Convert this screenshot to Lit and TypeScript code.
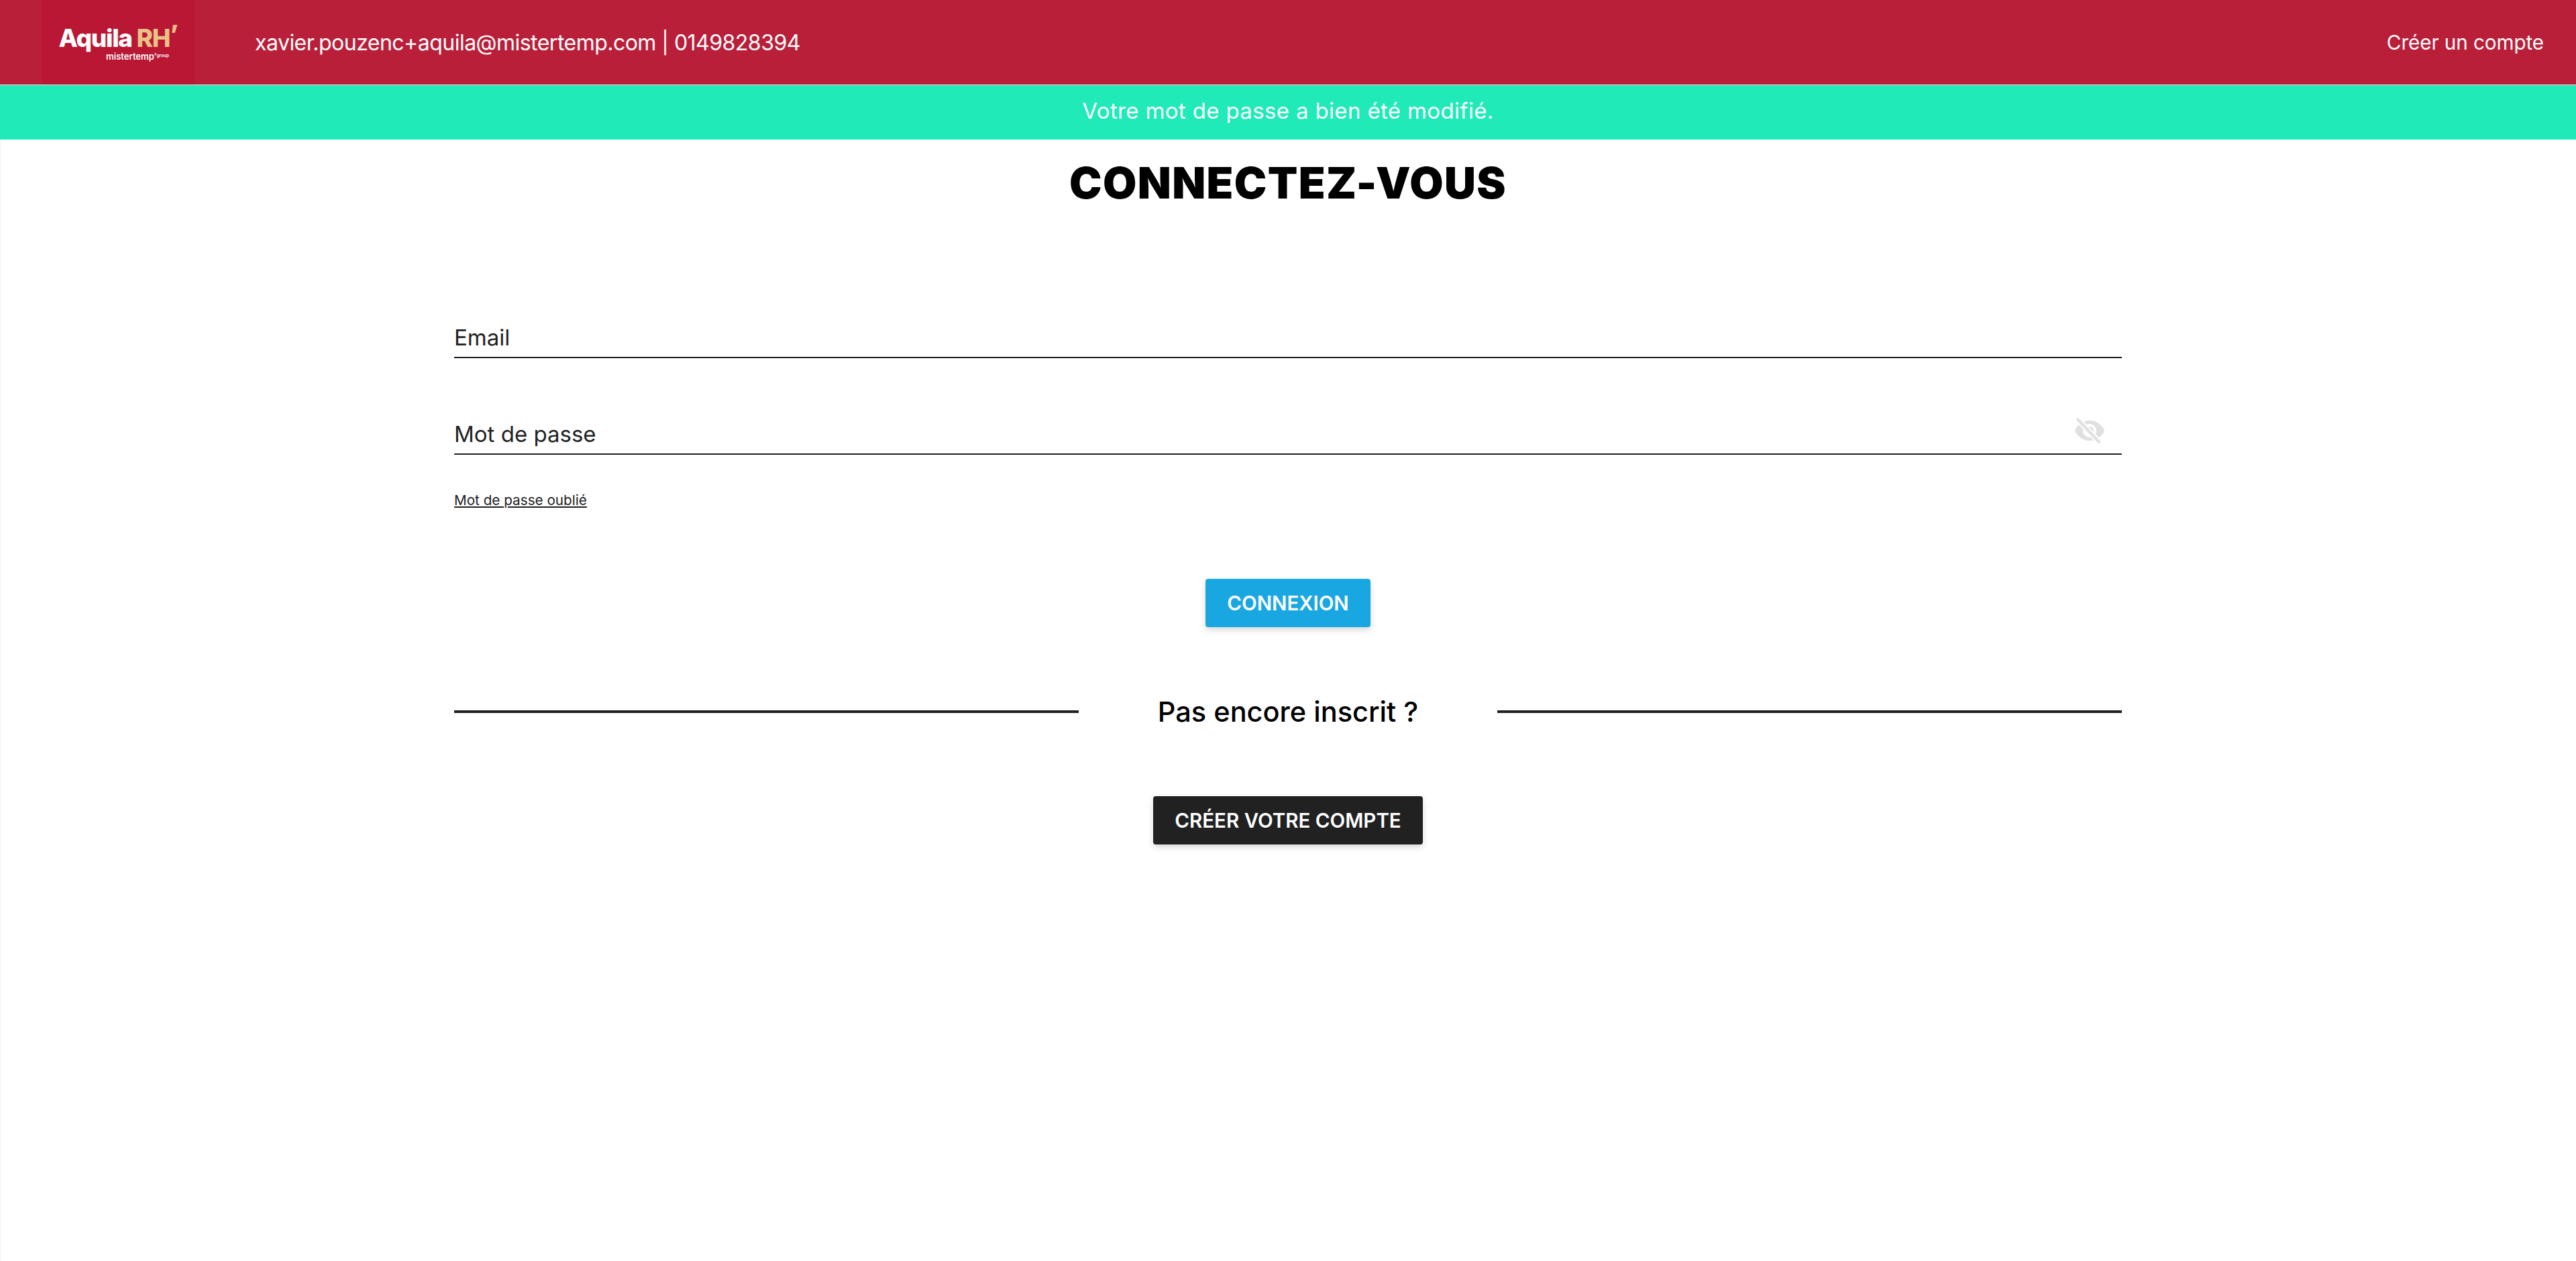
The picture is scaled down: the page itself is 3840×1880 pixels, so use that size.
import { LitElement, html, css } from "lit";
import { customElement } from "lit/decorators.js";

@customElement("app-root")
export class AppRoot extends LitElement {
  static styles = css`
    :host { display: block; min-height: 1880px; background: #fff; font-family: "Inter", "Noto Sans", sans-serif; color: #212121; }
    * { box-sizing: border-box; }
    .top { height: 127px; background: #ba1f3a; border-bottom: 1px solid #f3d5da; display: flex; align-items: center; padding: 0 48px 0 62px; color: #fff; }
    .logo { width: 228px; height: 126px; background: #b91733; flex: none; display: flex; flex-direction: column; align-items: center; padding-top: 41px; }
    .logo-main { font-size: 37px; line-height: 30px; height: 30px; font-weight: 800; letter-spacing: -1.3px; white-space: nowrap; }
    .logo-main span { color: #e8c187; }
    .logo-main em { font-style: normal; color: #e8c187; font-size: 38px; position: relative; top: -5px; }
    .logo-sub { font-size: 13px; line-height: 12px; height: 12px; margin-top: 6px; font-weight: 600; letter-spacing: 0; margin-left: 58px; white-space: nowrap; }
    .logo-sub small { font-size: 6.500px; letter-spacing: 0; vertical-align: 4px; }
    .user { margin-left: 90px; font-size: 32px; letter-spacing: -0.52px; white-space: nowrap; }
    .spacer { flex: 1; }
    .signup { font-size: 29.700px; letter-spacing: -0.1px; white-space: nowrap; }
    .notice { height: 81px; background: #1feab8; color: #fff; display: flex; align-items: center; justify-content: center; font-size: 33px; letter-spacing: 0.35px; padding-bottom: 6px; }
    .page { box-shadow: inset 1px 0 0 #f2f2f2; min-height: 1672px; padding-top: 20px; }
    h1 { margin: 0; height: 90px; line-height: 90px; text-align: center; color: #000; font-size: 65px; font-weight: 900; letter-spacing: 1.4px; }
    .form { width: 2486px; margin: 0 auto; }
    .field { height: 72px; border-bottom: 2px solid #212121; display: flex; align-items: flex-end; justify-content: space-between; font-size: 33px; line-height: 58px; }
    .field.email { margin-top: 144px; }
    .field.pass { margin-top: 72px; }
    .eye { width: 48px; height: 48px; margin-right: 24px; margin-bottom: 10px; display: block; fill: #e0e0e0; }
    .forgot { display: block; margin-top: 54px; font-size: 20.700px; line-height: 28px; color: #212121; text-decoration: underline; }
    .actions { display: flex; justify-content: center; }
    .btn { height: 72px; border-radius: 4px; color: #fff; font-size: 29.500px; font-weight: 600; display: flex; align-items: center; justify-content: center; box-shadow: 0 4px 10px rgba(0,0,0,0.16); white-space: nowrap; }
    .blue { width: 246px; background: #19a7e2; margin-top: 103px; }
    .dark { width: 402px; background: #212121; margin-top: 88px; }
    .divider { display: flex; align-items: center; margin-top: 88px; height: 76px; }
    .divider i { flex: 1; height: 4px; background: #212121; }
    .divider b { width: 624px; text-align: center; font-size: 41.500px; font-weight: 500; color: #000; }
  `;
  render() {
    return html`
      <header class="top">
        <div class="logo">
          <div class="logo-main">Aquila <span>RH</span><em>’</em></div>
          <div class="logo-sub">mistertemp’<small>group</small></div>
        </div>
        <div class="user">xavier.pouzenc+aquila@mistertemp.com | 0149828394</div>
        <div class="spacer"></div>
        <div class="signup">Créer un compte</div>
      </header>
      <div class="notice">Votre mot de passe a bien été modifié.</div>
      <main class="page">
        <h1>CONNECTEZ-VOUS</h1>
        <div class="form">
          <div class="field email"><span>Email</span></div>
          <div class="field pass"><span>Mot de passe</span>
            <svg class="eye" viewBox="0 0 24 24"><path d="M12 4.500C7 4.500 2.700 7.600 1 12c1.700 4.400 6 7.500 11 7.500s9.300-3.100 11-7.500c-1.700-4.400-6-7.500-11-7.500zM12 17a5 5 0 1 1 0-10 5 5 0 0 1 0 10zm0-8a3 3 0 1 0 0 6 3 3 0 0 0 0-6z"/><path d="M2.500 3 19.500 21" stroke="#fff" stroke-width="4.200" fill="none"/><path d="M2.500 3 19.500 21" stroke="#e0e0e0" stroke-width="2.200" fill="none"/></svg>
          </div>
          <a class="forgot">Mot de passe oublié</a>
          <div class="actions"><div class="btn blue">CONNEXION</div></div>
          <div class="divider"><i></i><b>Pas encore inscrit ?</b><i></i></div>
          <div class="actions"><div class="btn dark">CRÉER VOTRE COMPTE</div></div>
        </div>
      </main>
    `;
  }
}
